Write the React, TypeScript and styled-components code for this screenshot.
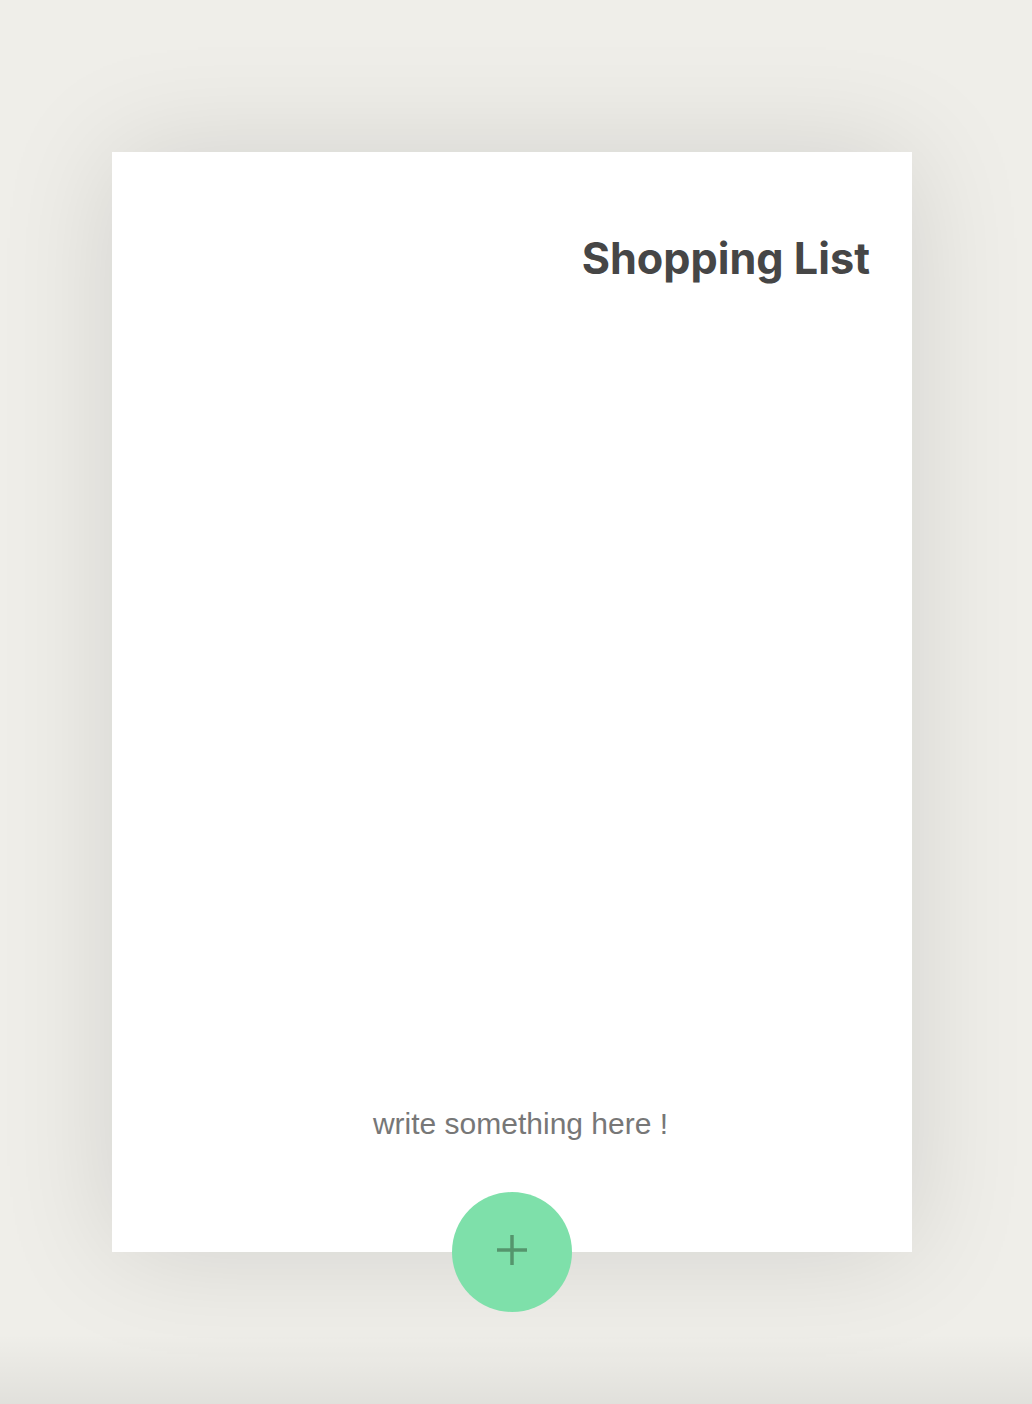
import React from "react";
import styled, { createGlobalStyle } from "styled-components";

const Global = createGlobalStyle`
  html, body { margin: 0; padding: 0; }
  body {
    background: #efeee9;
    min-height: 1404px;
    font-family: "Liberation Sans", Arial, sans-serif;
  }
`;

const Page = styled.div`
  position: relative;
  height: 1404px;
  overflow: hidden;
  display: flex;
  justify-content: center;
  padding: 152px 8px 0 0;
  box-sizing: border-box;
  &::after {
    content: "";
    position: absolute;
    left: 0;
    right: 0;
    bottom: 0;
    height: 70px;
    background: linear-gradient(to bottom, rgba(0,0,0,0), rgba(0,0,0,0.06));
    pointer-events: none;
  }
`;

const Card = styled.div`
  position: relative;
  width: 800px;
  height: 1100px;
  background: #ffffff;
  box-shadow: 0 0 110px rgba(0, 0, 0, 0.12);
  display: flex;
  flex-direction: column;
  box-sizing: border-box;
  padding: 80px 42px 0 42px;
`;

const Title = styled.h1`
  margin: 0;
  text-align: right;
  font-family: Inter, "Liberation Sans", sans-serif;
  font-weight: 700;
  font-size: 43.2px;
  line-height: 52px;
  color: #464646;
`;

const Spacer = styled.div`
  flex: 1;
`;

const Input = styled.input`
  border: none;
  outline: none;
  background: transparent;
  text-align: center;
  font-family: "Liberation Sans", Arial, sans-serif;
  font-size: 30px;
  color: #777;
  margin-bottom: 110px;
  padding: 0 0 0 17px;
  height: 36px;
  &::placeholder {
    color: #777;
  }
`;

const AddButton = styled.button`
  position: absolute;
  left: 50%;
  bottom: -60px;
  transform: translateX(-50%);
  width: 120px;
  height: 120px;
  border-radius: 50%;
  border: none;
  background: #7ee0aa;
  display: flex;
  align-items: center;
  justify-content: center;
  padding: 0 0 5px 0;
  cursor: pointer;
`;

export default function App() {
  return (
    <>
      <Global />
      <Page>
        <Card>
          <Title>Shopping List</Title>
          <Spacer />
          <Input placeholder="write something here !" />
          <AddButton aria-label="add">
            <svg width="30" height="30" viewBox="0 0 30 30">
              <path d="M15 0 V30 M0 15 H30" stroke="#55956d" strokeWidth="3.5" />
            </svg>
          </AddButton>
        </Card>
      </Page>
    </>
  );
}
